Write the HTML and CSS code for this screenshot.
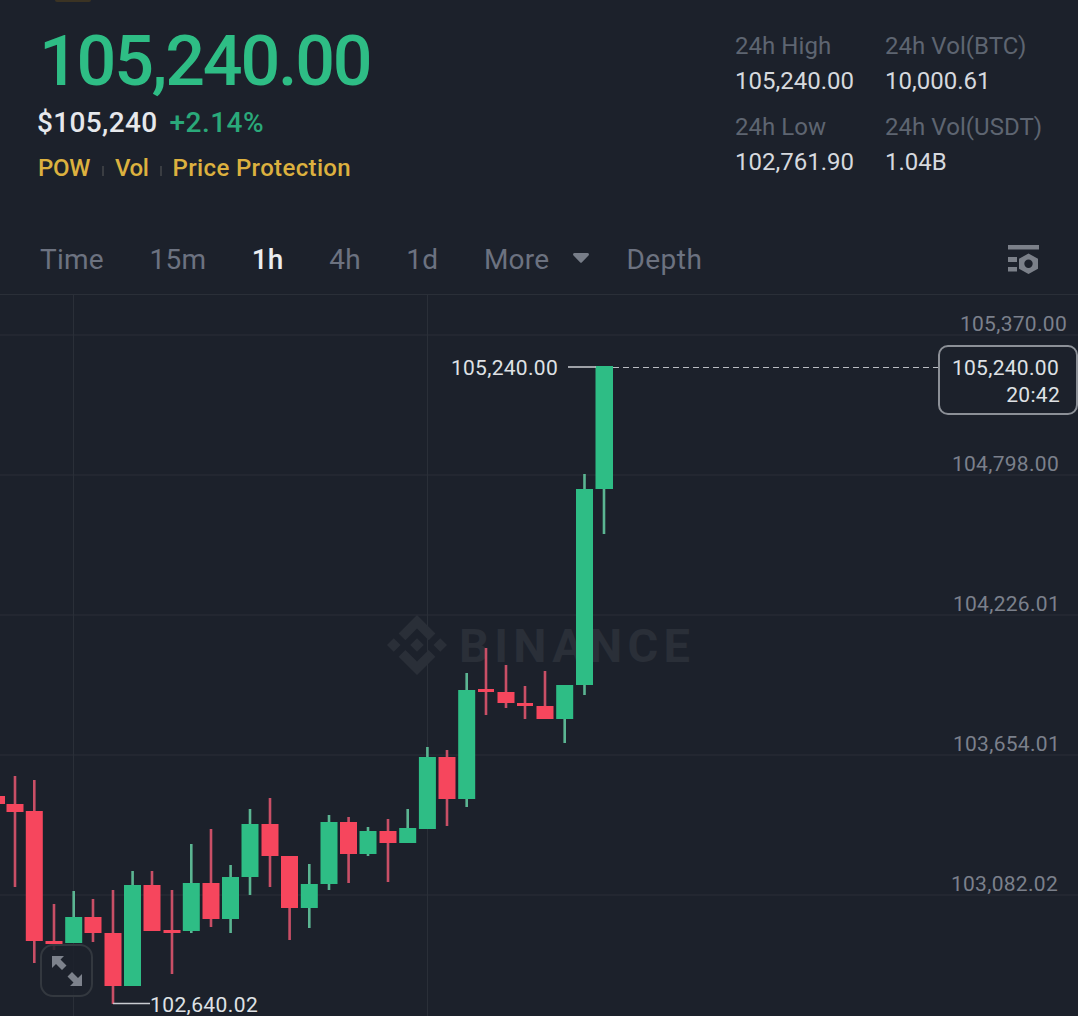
FILE: index.html
```html
<!DOCTYPE html>
<html lang="en">
<head>
<meta charset="utf-8">
<title>BTC/USDT</title>
<link rel="stylesheet" href="styles.css">
</head>
<body>
<main class="page">
  <div class="top-mark"></div>
  <section class="summary">
    <div class="quote">
      <div class="price">105,240.00</div>
      <div class="sub"><span class="fiat">$105,240</span><span class="change">+2.14%</span></div>
      <div class="tags"><span>POW</span><i></i><span>Vol</span><i></i><span class="wide">Price Protection</span></div>
    </div>
    <dl class="stats">
      <div class="stat"><dt>24h High</dt><dd>105,240.00</dd></div>
      <div class="stat"><dt>24h Vol(BTC)</dt><dd>10,000.61</dd></div>
      <div class="stat"><dt>24h Low</dt><dd>102,761.90</dd></div>
      <div class="stat"><dt>24h Vol(USDT)</dt><dd>1.04B</dd></div>
    </dl>
  </section>
  <nav class="tabs">
    <span>Time</span>
    <span>15m</span>
    <span class="active">1h</span>
    <span>4h</span>
    <span>1d</span>
    <span class="more">More<svg class="caret" width="16" height="10" viewBox="0 0 16 10"><path d="M1.500 0h13a1.400 1.400 0 0 1 1 2.400L9 9.300a1.400 1.400 0 0 1-2 0L.5 2.400a1.400 1.400 0 0 1 1-2.400z"/></svg></span>
    <span class="depth">Depth</span>
    <svg class="settings" width="31" height="29" viewBox="0 0 31 29"><path d="M0 0h31v4.500H0zM0 12h9v5H0zM0 22h9v4.500H0z"/><path fill-rule="evenodd" d="M20.500 8.500l9.500 5.300v10L20.500 29 11 23.800v-10zM20.500 14.500a4.200 4.200 0 1 0 0 8.400 4.200 4.200 0 0 0 0-8.400z"/></svg>
  </nav>
  <section class="chart">
    <svg class="plot" width="1078" height="722" viewBox="0 294 1078 722">
      <path class="grid" d="M0 294.500H1078M0 335H1078M0 475H1078M0 615H1078M0 755H1078M0 895H1078M73.500 294V1016M427.500 294V1016"/>
      <g class="mark">
        <path transform="translate(387 615) scale(1.875)" d="M9.800 13.400 16 7.200l6.200 6.200 3.600-3.600L16 0 6.200 9.800zM0 16l3.600-3.600L7.200 16l-3.600 3.600zM9.800 18.600 16 24.800l6.200-6.200 3.600 3.600L16 32l-9.800-9.800zM24.800 16l3.600-3.600L32 16l-3.600 3.600zM19.600 16 16 12.400 12.400 16l3.600 3.600z"/>
        <text class="mark-text" x="459" y="662">BINANCE</text>
      </g>
      <path class="wick down" d="M15 776V887M34.300 780V963M54 904V950M93 899V942M113 890V1004M152 871V931M172 890V974M211 829V927M270 798V887M289.600 856V940M348.600 817V883M388 819V882M447 750V826M486 648V715M506 665V708M525 686V719M545 671V719"/>
      <path class="wick up" d="M73.700 891V943M132.600 871V986M191.300 844V933M230.600 865V933M250 809V895M309.300 864V928M329 815V890M368 827V856M407.700 809V843M427.400 747V829M466.700 673V807M564.700 685V743M584.500 474V695M604 366V534"/>
      <path class="body down" d="M0 796h5v8H0zM6.500 804h17v8h-17zM25.800 811h17v130h-17zM45.500 941h17v3h-17zM84.500 917h17v16h-17zM104.500 933h17v53h-17zM143.500 885h17v46h-17zM163.500 930h17v3h-17zM202.500 883h17v36h-17zM261.500 824h17v32h-17zM281 856h17v52h-17zM340 822h17v32h-17zM379.500 831h17v12h-17zM438.500 757h17v42h-17zM478 689h16v3h-16zM497.500 692h17v11h-17zM517 703h16v3h-16zM536.500 706h17v13h-17z"/>
      <path class="body up" d="M65.200 917h17v26h-17zM124 885h17v101h-17zM182.800 883h17v48h-17zM222 877h17v42h-17zM241.500 824h17v53h-17zM300.800 884h17v24h-17zM320.500 822h17v62h-17zM359.500 831h17v23h-17zM399.200 828h17v15h-17zM418.900 757h17v72h-17zM458.200 690h17v109h-17zM556.200 685h17v34h-17zM576 489h17v196h-17zM595.500 366h17.500v123h-17.500z"/>
      <path class="marker" d="M568 367H596M113 1003.500H150"/>
      <path class="dash" d="M613 367.500H938"/>
      <text class="axis" x="1067" y="331">105,370.00</text>
      <text class="axis" x="1059" y="471">104,798.00</text>
      <text class="axis" x="1060" y="611">104,226.01</text>
      <text class="axis" x="1060" y="751">103,654.01</text>
      <text class="axis" x="1058" y="891">103,082.02</text>
      <text class="axis" x="1066" y="1032">102,510.00</text>
      <text class="callout" x="558" y="375">105,240.00</text>
      <text class="callout low" x="150" y="1012">102,640.02</text>
      <rect class="box" x="939" y="346" width="138" height="68" rx="9"/>
      <text class="callout" x="1059" y="375">105,240.00</text>
      <text class="callout" x="1060" y="402">20:42</text>
    </svg>
    <div class="expand">
      <svg width="30" height="30" viewBox="0 0 30 30"><path d="M0 0H12L8.500 3.500 14.500 9.500 10 14 4 8 0 12zM30 30H18L21.500 26.500 15.500 20.500 20 16 26 22 30 18z"/></svg>
    </div>
  </section>
</main>
</body>
</html>
```
FILE: styles.css
```css
* { box-sizing: border-box; }
html, body { margin: 0; height: 100%; overflow: hidden; background: #1c212b; }
body { font-family: Roboto, "Liberation Sans", sans-serif; }

.page { width: 1078px; height: 1016px; display: flex; flex-direction: column; overflow: hidden; background: #1c212b; }
.top-mark { width: 36px; height: 2px; margin-left: 55px; background: #3b3323; border-radius: 0 0 8px 8px; flex: none; }

.summary { display: flex; justify-content: space-between; height: 218px; padding: 0 36px 0 38px; flex: none; }
.quote { display: flex; flex-direction: column; }
.price { margin: 20px 0 0 1px; font-size: 70px; line-height: 78px; font-weight: 500; color: #2ebd85; letter-spacing: -2.2px; }
.sub { display: flex; gap: 12px; margin-top: 7px; font-size: 28px; line-height: 32px; }
.fiat { color: #e6e8ec; font-weight: 500; letter-spacing: .35px; margin-left: -1px; }
.change { color: #2aa97a; font-weight: 500; letter-spacing: .5px; }
.tags { display: flex; align-items: center; margin-top: 13px; font-size: 24px; line-height: 32px; font-weight: 500; color: #dcb13f; letter-spacing: -.35px; }
.tags .wide { letter-spacing: .35px; }
.tags i { width: 2px; height: 10px; margin: 6px 11px 0; background: #3a3d42; }
.tags span:first-child + i { margin: 6px 11px 0 12px; }

.stats { display: grid; grid-template-columns: 150px 157px; grid-auto-rows: 81px; margin: 28px 0 0; white-space: nowrap; }
.stat { margin: 0; }
.stat dt { font-size: 24px; line-height: 32px; color: #5e6571; letter-spacing: .05px; }
.stat dd { margin: 3px 0 0; font-size: 24px; line-height: 32px; color: #d6d9de; letter-spacing: 0; }

.tabs { display: flex; align-items: center; gap: 45.5px; height: 74px; padding: 4px 39px 0 40px; flex: none; font-size: 28px; letter-spacing: .25px; color: #6c7280; }
.tabs .active { color: #eaecef; font-weight: 500; }
.more { display: flex; align-items: center; gap: 24px; }
.caret { fill: #777d88; margin-top: -2px; }
.depth { margin-left: -8.500px; letter-spacing: .5px; }
.settings { fill: #7b8089; margin-left: auto; }

.chart { position: relative; flex: 1; min-height: 0; }
.plot { display: block; }
.grid { stroke: #2a2f38; stroke-width: 1; fill: none; }
.mark path { fill: #2a2f38; }
.mark-text { font-size: 47px; font-weight: 700; fill: #2a2f38; letter-spacing: 5.3px; }
.wick { fill: none; stroke-width: 2.6; }
.wick.down { stroke: #c94f66; }
.wick.up { stroke: #5bb592; }
.body.down { fill: #f6465d; }
.body.up { fill: #2ebd85; }
.marker { stroke: #c9ccd1; stroke-width: 1.500; fill: none; }
.dash { stroke: #b9bcc2; stroke-width: 1.200; stroke-dasharray: 6 4; fill: none; }
.axis { font-size: 21px; fill: #7b808b; text-anchor: end; letter-spacing: .3px; }
.callout { font-size: 21px; fill: #dfe1e5; text-anchor: end; letter-spacing: .3px; }
.callout.low { text-anchor: start; letter-spacing: .4px; }
.box { fill: #1c212b; stroke: #8c9097; stroke-width: 2; }

.expand { position: absolute; left: 40px; top: 650px; width: 53px; height: 53px; display: flex; align-items: center; justify-content: center; border: 2px solid #33383f; border-radius: 13px; background: rgba(28, 33, 43, .85); }
.expand svg { fill: #7d828c; }
```
